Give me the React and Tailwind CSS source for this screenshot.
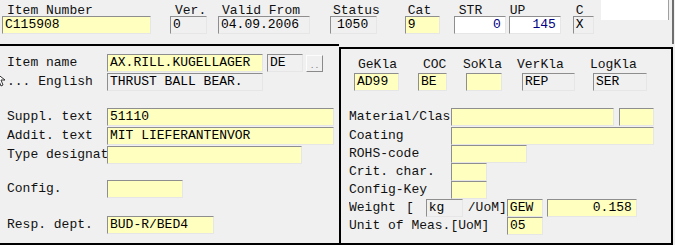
import React from "react";

const tones = {
  yellow: "bg-[#ffffc0]",
  gray: "bg-[#f0f0f0]",
  white: "bg-white",
};

// Sunken edit box in the old Windows style
const Field = ({ tone = "yellow", right = false, blue = false, className = "", children }) => (
  <div
    className={`h-[18px] shrink-0 overflow-hidden whitespace-nowrap border border-t-[#8e8e8e] border-l-[#8e8e8e] border-r-[#e6e6e6] border-b-[#e6e6e6] px-[2px] leading-[16px] ${
      tones[tone]
    } ${right ? "text-right pr-[4px]" : ""} ${blue ? "text-[#000080]" : "text-black"} ${className}`}
  >
    {children}
  </div>
);

// Label above its box (header strip)
const Col = ({ label, className = "", labelClass = "", children }) => (
  <div className={`flex shrink-0 flex-col pt-[4px] ${className}`}>
    <div className={`h-[12px] whitespace-nowrap leading-[14px] ${labelClass}`}>{label}</div>
    {children}
  </div>
);

// Label left of its boxes (panels)
const Row = ({ label, labelClass = "w-[100px]", className = "", children }) => (
  <div className={`flex h-[18px] items-start ${className}`}>
    <div className={`shrink-0 overflow-hidden whitespace-nowrap pt-[2px] leading-[14px] ${labelClass}`}>{label}</div>
    {children}
  </div>
);

export default function App() {
  return (
    <div className="h-[245px] w-[675px] overflow-hidden bg-[#f0f0f0] font-['Liberation_Mono',monospace] text-[13px] text-[#111]">
      {/* Header strip */}
      <div className="flex h-[44px] items-start">
        <Col label="Item Number" className="ml-[2px]" labelClass="pl-[5px]">
          <Field className="w-[149px]">C115908</Field>
        </Col>
        <Col label="Ver." className="ml-[19px]" labelClass="pl-[5px]">
          <Field tone="gray" className="w-[37px]">0</Field>
        </Col>
        <Col label="Valid From" className="ml-[11px]" labelClass="pl-[4px]">
          <Field tone="gray" className="w-[92px]">04.09.2006</Field>
        </Col>
        <Col label="Status" className="ml-[20px]" labelClass="pl-[3px]">
          <Field tone="gray" className="w-[47px] pl-[6px]">1050</Field>
        </Col>
        <Col label="Cat" className="ml-[25px]" labelClass="pl-[3px]">
          <Field className="w-[35px]">9</Field>
        </Col>
        <Col label="STR" className="ml-[14px]" labelClass="pl-[5px]">
          <Field tone="white" right blue className="w-[52px]">0</Field>
        </Col>
        <Col label="UP" className="ml-[3px]" labelClass="pl-[1px]">
          <Field tone="white" right blue className="w-[52px]">145</Field>
        </Col>
        <Col label="C" className="ml-[12px]" labelClass="pl-[3px]">
          <Field tone="gray" className="w-[21px]">X</Field>
        </Col>
        <div className="ml-[7px] h-[20px] w-[68px] border-r border-[#a0a0a0] bg-white" />
        <div className="ml-[3px] h-[44px] w-[2px] bg-[#6e6e6e]" />
      </div>

      <div className="flex h-[201px]">
        {/* Left panel */}
        <div className="relative w-[339px] shrink-0 border-y-2 border-black pl-[7px]">
          <Row label="Item name" className="mt-[8px]">
            <Field className="w-[156px]">AX.RILL.KUGELLAGER</Field>
            <Field tone="gray" className="ml-[4px] w-[36px]">DE</Field>
            <div className="ml-[3px] mt-[1px] flex h-[17px] w-[17px] items-end justify-center border border-t-[#fcfcfc] border-l-[#fcfcfc] border-r-[#8a8a8a] border-b-[#8a8a8a] text-[8px] leading-[10px] text-[#777]">
              ..
            </div>
          </Row>
          <Row label="... English" className="mt-[1px]">
            <Field tone="gray" className="w-[156px]">THRUST BALL BEAR.</Field>
          </Row>
          <Row label="Suppl. text" className="mt-[17px]">
            <Field className="w-[227px]">51110</Field>
          </Row>
          <Row label="Addit. text" className="mt-[1px]">
            <Field className="w-[227px]">MIT LIEFERANTENVOR</Field>
          </Row>
          <Row label="Type designat" className="mt-[1px]">
            <Field className="w-[195px]" />
          </Row>
          <Row label="Config." className="mt-[16px]">
            <Field className="w-[76px]" />
          </Row>
          <Row label="Resp. dept." className="mt-[18px]">
            <Field className="w-[107px]">BUD-R/BED4</Field>
          </Row>

          {/* mouse pointer, cut by the left edge */}
          <svg className="absolute left-[-5px] top-[26px]" width="12" height="16" viewBox="0 0 12 16">
            <path d="M1 1 L1 12 L4 9 L6 14 L8 13 L6 8 L10 8 Z" fill="#fff" stroke="#333" strokeWidth="1" />
          </svg>
        </div>

        {/* Right panel */}
        <div className="mt-[3px] h-[198px] w-[334px] shrink-0 border-2 border-black">
          <div className="mt-[9px] flex h-[13px] leading-[14px]">
            <span className="ml-[17px] w-[65px] shrink-0">GeKla</span>
            <span className="w-[40px] shrink-0">COC</span>
            <span className="w-[54px] shrink-0">SoKla</span>
            <span className="w-[73px] shrink-0">VerKla</span>
            <span className="shrink-0">LogKla</span>
          </div>
          <div className="mt-[2px] flex">
            <Field className="ml-[13px] w-[45px]">AD99</Field>
            <Field className="ml-[19px] w-[29px]">BE</Field>
            <Field className="ml-[19px] w-[36px]" />
            <Field tone="gray" className="ml-[20px] w-[53px]">REP</Field>
            <Field tone="gray" className="ml-[18px] w-[54px]">SER</Field>
          </div>

          <div className="pl-[8px]">
            <Row label="Material/Clas" labelClass="w-[102px]" className="mt-[17px]">
              <Field className="w-[163px]" />
              <Field className="ml-[5px] w-[35px]" />
            </Row>
            <Row label="Coating" labelClass="w-[102px]" className="mt-[1px]">
              <Field className="w-[203px]" />
            </Row>
            <Row label="ROHS-code" labelClass="w-[102px]">
              <Field className="w-[76px]" />
            </Row>
            <Row label="Crit. char." labelClass="w-[102px]">
              <Field className="w-[36px]" />
            </Row>
            <Row label="Config-Key" labelClass="w-[102px]">
              <Field className="w-[36px]" />
            </Row>
            <Row label="Weight" labelClass="w-[57px]">
              <span className="shrink-0 pt-[2px] leading-[14px]">[</span>
              <Field tone="gray" className="ml-[12px] w-[37px]">kg</Field>
              <span className="ml-[5px] shrink-0 pt-[2px] leading-[14px]">/UoM]</span>
              <Field className="w-[36px]">GEW</Field>
              <Field right className="ml-[4px] w-[90px]">0.158</Field>
            </Row>
            <Row label="Unit of Meas.[UoM]" labelClass="w-[158px]">
              <Field className="w-[36px]">05</Field>
            </Row>
          </div>
        </div>
      </div>
    </div>
  );
}
